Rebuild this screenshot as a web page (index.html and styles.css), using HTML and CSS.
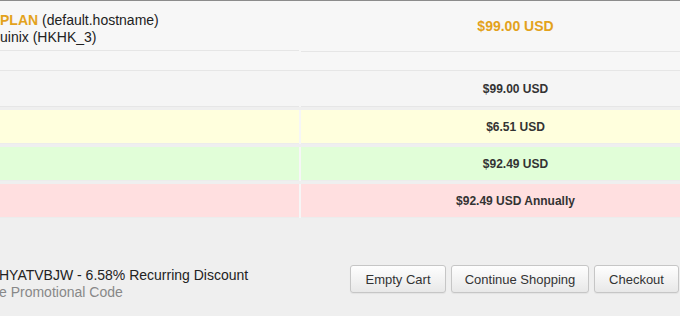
FILE: index.html
```html
<!DOCTYPE html>
<html lang="en">
<head>
    <meta charset="UTF-8">
    <meta name="viewport" content="width=device-width, initial-scale=1.0">
    <title>Shopping Cart</title>
    <link rel="stylesheet" href="styles.css">
</head>
<body>
    <div class="cart">
        <div class="row item-row">
            <div class="cell desc">
                <span class="plan">PLAN</span> (default.hostname)<br>
                uinix (HKHK_3)
            </div>
            <div class="cell price plan-price">$99.00 USD</div>
        </div>
        <div class="row empty-row">
            <div class="cell"></div>
            <div class="cell"></div>
        </div>
        <div class="row total-row subtotal">
            <div class="cell"></div>
            <div class="cell price">$99.00 USD</div>
        </div>
        <div class="row total-row discount">
            <div class="cell"></div>
            <div class="cell price">$6.51 USD</div>
        </div>
        <div class="row total-row total">
            <div class="cell"></div>
            <div class="cell price">$92.49 USD</div>
        </div>
        <div class="row total-row recurring">
            <div class="cell"></div>
            <div class="cell price">$92.49 USD Annually</div>
        </div>
    </div>

    <div class="cart-footer">
        <div class="promo">
            <div class="promo-code">HYATVBJW - 6.58% Recurring Discount</div>
            <div class="promo-remove">e Promotional Code</div>
        </div>
        <div class="actions">
            <button class="btn btn-empty">Empty Cart</button>
            <button class="btn btn-continue">Continue Shopping</button>
            <button class="btn btn-checkout">Checkout</button>
        </div>
    </div>
</body>
</html>
```

FILE: styles.css
```css
body {
    margin: 0;
    width: 680px;
    height: 316px;
    overflow: hidden;
    background-color: #efefef;
    font-family: "Liberation Sans", Arial, sans-serif;
    font-size: 14px;
    color: #222;
}

.cart {
    width: 730px;
}

.row {
    display: grid;
    grid-template-columns: 299px 1fr;
    column-gap: 2px;
    background-color: #f7f7f7;
}

.cell {
    display: flex;
    align-items: center;
    border-bottom: 1px solid #e6e6e6;
    background-color: #f7f7f7;
}

.item-row {
    border-top: 1px solid #8c8c8c;
}

.item-row .cell {
    height: 50px;
}

.desc {
    display: block;
    box-sizing: border-box;
    padding-top: 11px;
    line-height: 17px;
}

.plan {
    font-weight: bold;
    color: #e3a21c;
}

.empty-row {
    border-bottom: 1px solid #e6e6e6;
}

.empty-row .cell {
    height: 18px;
    border-bottom: none;
}

.price {
    justify-content: center;
    font-weight: bold;
    font-size: 12px;
    color: #333;
}

.plan-price {
    font-size: 14px;
    color: #e3a21c;
}

.total-row {
    margin-bottom: 3px;
    background-color: #f6f6f6;
}

.subtotal {
    background-color: #f5f5f5;
}

.subtotal .cell {
    height: 35px;
    background-color: #f5f5f5;
}

.discount .cell,
.total .cell,
.recurring .cell {
    height: 33px;
    border-bottom-color: #ececec;
}

.discount .cell {
    background-color: #ffffdd;
}

.total .cell {
    background-color: #e1fed8;
}

.recurring .cell {
    background-color: #ffdfe0;
}

.cart-footer {
    display: flex;
    justify-content: space-between;
    align-items: flex-start;
    width: 679px;
    margin-top: 44px;
}

.promo {
    margin-left: -1px;
    padding-top: 5px;
    line-height: 17px;
}

.promo-remove {
    color: #888;
}

.actions {
    display: flex;
    gap: 5px;
    padding-top: 3px;
}

.btn {
    height: 28px;
    padding: 0;
    font-family: "Liberation Sans", Arial, sans-serif;
    font-size: 13px;
    color: #333;
    background: linear-gradient(#fefefe, #e8e8e8);
    border: 1px solid #c6c6c6;
    border-radius: 3px;
    box-shadow: 0 1px 1px rgba(0, 0, 0, 0.05);
    cursor: pointer;
}

.btn-empty {
    width: 96px;
}

.btn-continue {
    width: 138px;
}

.btn-checkout {
    width: 85px;
}
```
